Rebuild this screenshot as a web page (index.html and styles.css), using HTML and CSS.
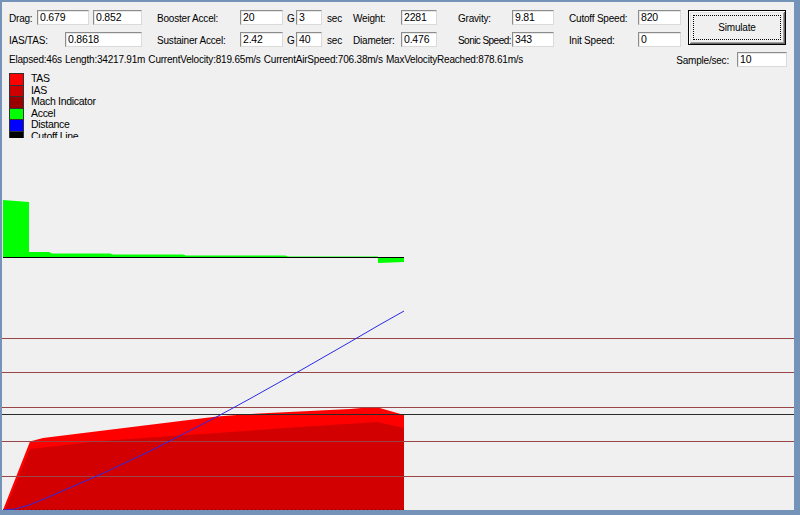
FILE: index.html
```html
<!DOCTYPE html>
<html>
<head>
<meta charset="utf-8">
<link rel="stylesheet" href="styles.css">
</head>
<body>
<div class="frame">
  <div class="top">
    <div class="left">
      <div class="lrow">
        <span class="lbl w-drag">Drag:</span>
        <span class="inp w52">0.679</span>
        <span class="inp w49 ml4">0.852</span>
      </div>
      <div class="lrow">
        <span class="lbl w-ias">IAS/TAS:</span>
        <span class="inp w77">0.8618</span>
      </div>
    </div>
    <div class="right">
      <span class="lbl">Booster Accel:</span>
      <span class="inp">20</span>
      <span class="lbl pl4">G</span>
      <span class="inp">3</span>
      <span class="lbl pl5">sec</span>
      <span class="lbl">Weight:</span>
      <span class="inp">2281</span>
      <span class="lbl pl21">Gravity:</span>
      <span class="inp">9.81</span>
      <span class="lbl pl15">Cutoff Speed:</span>
      <span class="inp">820</span>
      <span></span>
      <div class="btn"><span class="focus">Simulate</span></div>

      <span class="lbl">Sustainer Accel:</span>
      <span class="inp">2.42</span>
      <span class="lbl pl4">G</span>
      <span class="inp">40</span>
      <span class="lbl pl5">sec</span>
      <span class="lbl">Diameter:</span>
      <span class="inp">0.476</span>
      <span class="lbl pl21 tight">Sonic Speed:</span>
      <span class="inp">343</span>
      <span class="lbl pl15">Init Speed:</span>
      <span class="inp">0</span>
    </div>
  </div>
  <div class="status">
    <span class="stats">Elapsed:46s&nbsp; Length:34217.91m&nbsp; CurrentVelocity:819.65m/s&nbsp; CurrentAirSpeed:706.38m/s&nbsp; MaxVelocityReached:878.61m/s</span>
    <div class="sample">
      <span class="lbl">Sample/sec:</span>
      <span class="inp w50">10</span>
    </div>
  </div>
  <div class="legend">
    <div class="item"><span class="sw c-tas"></span><span>TAS</span></div>
    <div class="item"><span class="sw c-ias"></span><span>IAS</span></div>
    <div class="item"><span class="sw c-mach"></span><span>Mach Indicator</span></div>
    <div class="item"><span class="sw c-acc"></span><span>Accel</span></div>
    <div class="item"><span class="sw c-dist"></span><span>Distance</span></div>
    <div class="item"><span class="sw c-cut"></span><span>Cutoff Line</span></div>
  </div>
  <svg class="chart" viewBox="2 138 792 372" width="792" height="372" preserveAspectRatio="none" shape-rendering="crispEdges">
    <!-- accel -->
    <polygon fill="#00ff00" shape-rendering="auto" points="3,200 29,202 29,252 49,252 52,253.5 110,253.5 113,254.5 183,254.5 186,255.5 285,255.5 288,256.5 378,256.5 378,257.5 3,257.5"/>
    <polygon fill="#00ff00" shape-rendering="auto" points="378,258 404,258 404,262 378,263"/>
    <line x1="3" y1="257.5" x2="404" y2="257.5" stroke="#000" stroke-width="1"/>
    <!-- speeds -->
    <polygon fill="#ff0000" shape-rendering="auto" points="3,510 30,441.5 43,438 217,416.5 250,414 350,409 367,407.5 378,407.5 404,415 404,510"/>
    <polygon fill="#d20000" shape-rendering="auto" points="5,510 30,449 100,441 217,433 300,427 377,422 404,428 404,510"/>
    <!-- mach lines -->
    <g stroke="#9a4545" stroke-width="1">
      <line x1="2" y1="338.5" x2="794" y2="338.5"/>
      <line x1="2" y1="372.5" x2="794" y2="372.5"/>
      <line x1="2" y1="407.5" x2="794" y2="407.5"/>
      <line x1="2" y1="441.5" x2="794" y2="441.5"/>
      <line x1="2" y1="476.5" x2="794" y2="476.5"/>
    </g>
    <line x1="2" y1="414.5" x2="794" y2="414.5" stroke="#2a2a2a" stroke-width="1"/>
    <line x1="3" y1="509.5" x2="404" y2="509.5" stroke="#7a0000" stroke-width="1" stroke-dasharray="1 3"/>
    <!-- distance -->
    <polyline fill="none" stroke="#2a2ae8" stroke-width="1" shape-rendering="auto" points="3,510 15,509 30,504.7 43,499.4 100,474.7 150,451.1 217,416.7 250,398.7 300,370.7 350,342 378,325.7 404,311"/>
  </svg>
</div>
</body>
</html>
```
FILE: styles.css
```css
* { box-sizing: border-box; }
html, body { margin: 0; padding: 0; }
body {
  width: 800px;
  height: 515px;
  overflow: hidden;
  font-family: "Liberation Sans", Arial, sans-serif;
  font-size: 10px;
  letter-spacing: -0.2px;
  color: #000;
  background: #7592b9;
}
.frame {
  width: 800px;
  height: 515px;
  border-style: solid;
  border-color: #7592b9;
  border-width: 2px 6px 5px 2px;
  background: #f0f0f0;
  display: flex;
  flex-direction: column;
}
.top {
  display: flex;
  padding: 8px 0 0 7px;
}
.left {
  width: 148px;
  display: flex;
  flex-direction: column;
  row-gap: 7px;
}
.lrow {
  display: flex;
  align-items: center;
  height: 15px;
}
.lbl {
  display: flex;
  align-items: center;
  white-space: nowrap;
  line-height: 13px;
  padding-top: 2px;
}
.tight { letter-spacing: -0.55px; }
.w-drag { width: 28px; }
.w-ias { width: 56px; }
.inp {
  display: flex;
  align-items: center;
  height: 15px;
  padding-left: 2px;
  background: #fff;
  border: 1px solid;
  border-color: #8c8c8c #dadada #dadada #8c8c8c;
  box-shadow: inset 1px 1px 0 #e6e6e6;
  line-height: 13px;
  white-space: nowrap;
  font-size: 10.5px;
}
.w52 { width: 52px; }
.w49 { width: 49px; }
.w77 { width: 77px; }
.w50 { width: 50px; }
.ml4 { margin-left: 4px; }
.right {
  display: grid;
  grid-template-columns: 83px 43px 13px 26px 31px 48px 36px 75px 42px 84px 43px 7px 98px;
  grid-template-rows: 15px 15px;
  row-gap: 7px;
}
.pl4 { padding-left: 4px; }
.pl5 { padding-left: 5px; }
.pl15 { padding-left: 15px; }
.pl21 { padding-left: 21px; }
.btn {
  grid-row: 1 / span 2;
  grid-column: 13;
  height: 35px;
  border: 1px solid #000;
  background: #f0f0f0;
  box-shadow: inset 1px 1px 0 #ffffff, inset -1px -1px 0 #696969, inset 2px 2px 0 #e3e3e3, inset -2px -2px 0 #a0a0a0;
  padding: 4px;
  display: flex;
}
.focus {
  flex: 1;
  border: 1px dotted #000;
  display: flex;
  align-items: center;
  justify-content: center;
}
.status {
  display: flex;
  justify-content: space-between;
  align-items: center;
  padding: 0 7px 0 7px;
  margin-top: 5px;
  height: 15px;
}
.stats {
  white-space: nowrap;
  word-spacing: -1px;
}
.sample {
  display: flex;
  align-items: center;
  gap: 8px;
}
.legend {
  margin-top: 6px;
  padding-left: 7px;
  height: 65px;
  overflow: hidden;
  flex: none;
}
.item {
  display: flex;
  align-items: center;
  height: 11.5px;
  gap: 7px;
}
.item span:last-child {
  font-size: 10.5px;
  letter-spacing: -0.3px;
  line-height: 11px;
}
.sw {
  width: 15px;
  height: 11.5px;
  border-left: 1px solid #333;
  border-right: 1px solid #333;
  border-top: 1px solid #333;
}
.c-tas { background: #ff0000; }
.c-ias { background: #cc0000; }
.c-mach { background: #990000; }
.c-acc { background: #00ff00; }
.c-dist { background: #0000ff; }
.c-cut { background: #000000; }
.chart {
  display: block;
  flex: none;
}
```
